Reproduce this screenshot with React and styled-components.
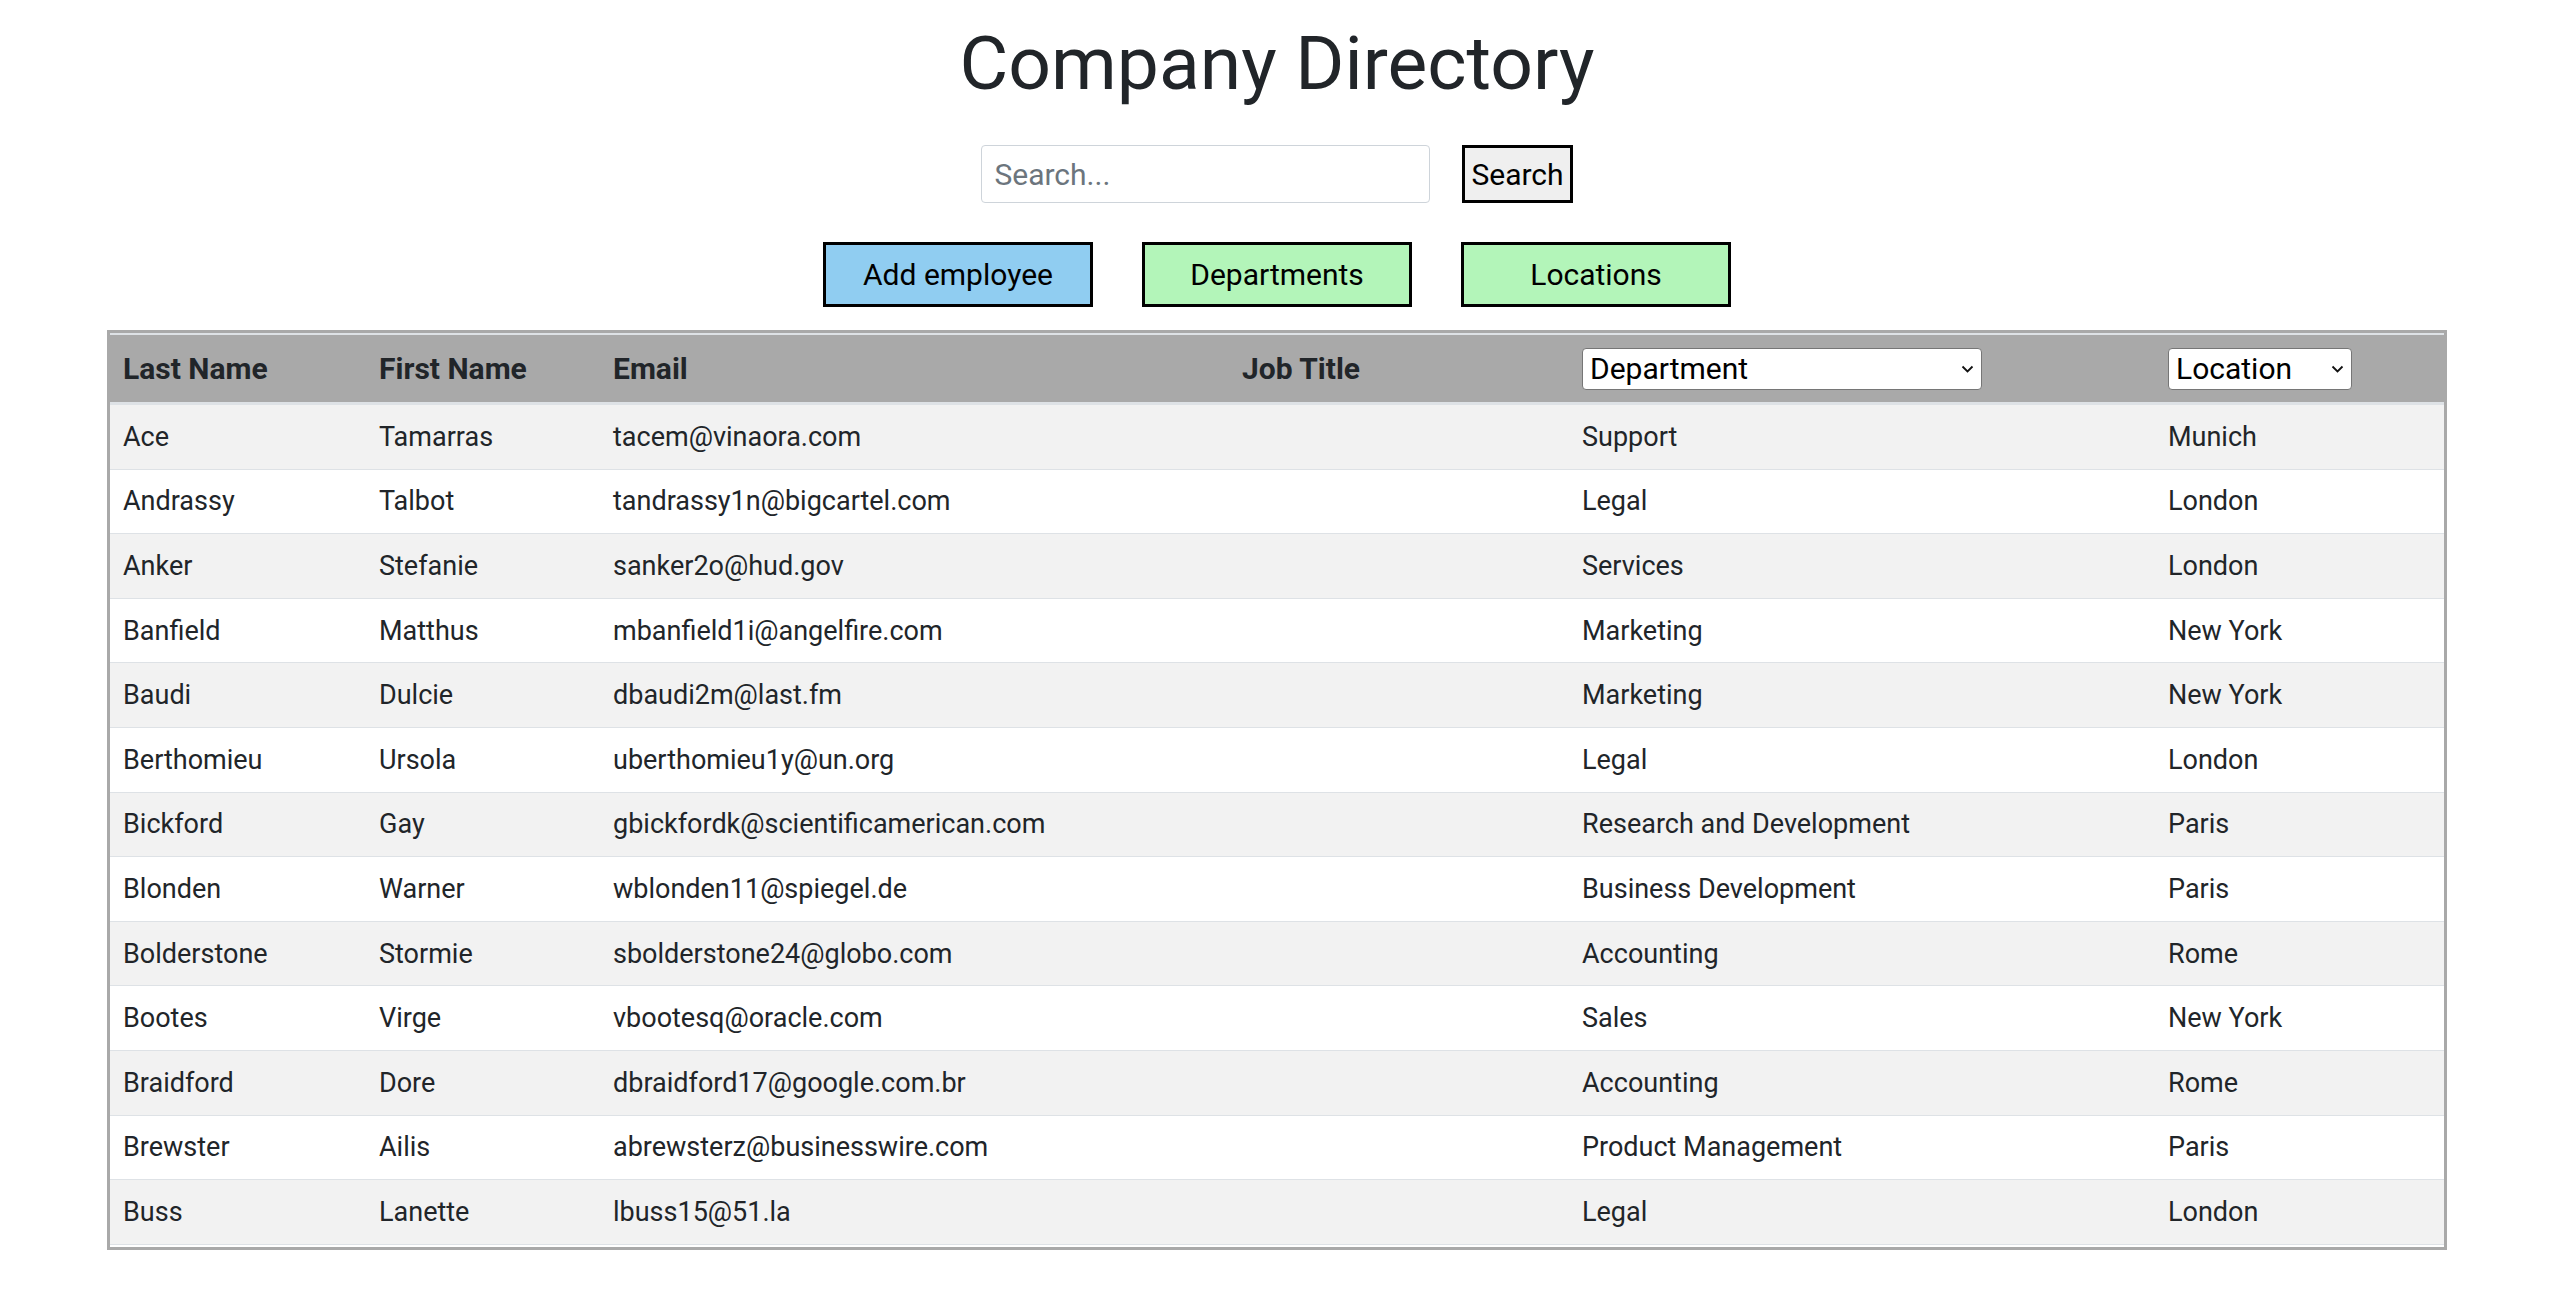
import React from 'react'
import styled, { createGlobalStyle } from 'styled-components'

const GlobalStyle = createGlobalStyle`
  body {
    margin: 0;
    background: #fff;
    color: #212529;
    font-family: Roboto, "Liberation Sans", Arial, sans-serif;
  }
`

const employees = [
  ['Ace', 'Tamarras', 'tacem@vinaora.com', 'Support', 'Munich'],
  ['Andrassy', 'Talbot', 'tandrassy1n@bigcartel.com', 'Legal', 'London'],
  ['Anker', 'Stefanie', 'sanker2o@hud.gov', 'Services', 'London'],
  ['Banfield', 'Matthus', 'mbanfield1i@angelfire.com', 'Marketing', 'New York'],
  ['Baudi', 'Dulcie', 'dbaudi2m@last.fm', 'Marketing', 'New York'],
  ['Berthomieu', 'Ursola', 'uberthomieu1y@un.org', 'Legal', 'London'],
  ['Bickford', 'Gay', 'gbickfordk@scientificamerican.com', 'Research and Development', 'Paris'],
  ['Blonden', 'Warner', 'wblonden11@spiegel.de', 'Business Development', 'Paris'],
  ['Bolderstone', 'Stormie', 'sbolderstone24@globo.com', 'Accounting', 'Rome'],
  ['Bootes', 'Virge', 'vbootesq@oracle.com', 'Sales', 'New York'],
  ['Braidford', 'Dore', 'dbraidford17@google.com.br', 'Accounting', 'Rome'],
  ['Brewster', 'Ailis', 'abrewsterz@businesswire.com', 'Product Management', 'Paris'],
  ['Buss', 'Lanette', 'lbuss15@51.la', 'Legal', 'London'],
]

const Page = styled.div`
  display: flex;
  flex-direction: column;
  align-items: center;
`

const Title = styled.h1`
  margin: 18px 0 0;
  font-size: 75px;
  font-weight: 400;
  line-height: 1.2;
  color: #212529;
`

const SearchBar = styled.form`
  display: flex;
  gap: 32px;
  margin-top: 37px;
`

const SearchInput = styled.input`
  box-sizing: border-box;
  width: 449px;
  height: 58px;
  padding: 0 12px;
  border: 1px solid #ced4da;
  border-radius: 4px;
  font-family: Roboto, sans-serif;
  font-size: 30px;
  color: #495057;
  &::placeholder {
    color: #6c757d;
  }
`

const SearchButton = styled.button`
  box-sizing: border-box;
  height: 58px;
  padding: 0 6px;
  background: #efefef;
  border: 3px solid #000;
  font-family: Roboto, sans-serif;
  font-size: 30px;
  color: #000;
`

const ActionBar = styled.div`
  display: flex;
  gap: 49px;
  margin-top: 39px;
`

const ActionButton = styled.button`
  box-sizing: border-box;
  width: 270px;
  height: 65px;
  background: ${p => (p.$tone === 'blue' ? '#90cdf1' : '#b3f5b9')};
  border: 3px solid #000;
  font-family: Roboto, sans-serif;
  font-size: 30px;
  color: #000;
`

const TableWrap = styled.div`
  box-sizing: border-box;
  width: calc(100% - 214px);
  height: 920px;
  margin-top: 23px;
  border: 3px solid #a9a9a9;
  overflow: hidden;
`

const Table = styled.table`
  width: 100%;
  border-collapse: separate;
  border-spacing: 0;
  table-layout: fixed;
  font-size: 27px;
`

const Col = styled.col`
  width: ${p => p.$w}px;
`

const HeadCell = styled.th`
  height: 67px;
  padding: 0 13px;
  background: #a9a9a9;
  border-top: 2px solid #dee2e6;
  border-bottom: 2px solid #dee2e6;
  text-align: left;
  font-size: 30px;
  font-weight: 700;
  color: #212529;
  vertical-align: middle;
`

const Row = styled.tr`
  background: ${p => (p.$odd ? '#f2f2f2' : '#fff')};
  &:last-child td {
    border-bottom: 1px solid #dee2e6;
  }
`

const Cell = styled.td`
  height: 63.6px;
  padding: 0 13px;
  border-top: 1px solid #dee2e6;
  vertical-align: middle;
  white-space: nowrap;
  color: #212529;
`

const SelectBox = styled.div`
  position: relative;
  width: ${p => p.$w}px;
  height: 42px;
`

const FilterSelect = styled.select`
  appearance: none;
  box-sizing: border-box;
  width: 100%;
  height: 100%;
  padding: 0 30px 0 7px;
  background: #fff;
  border: 1px solid #767676;
  border-radius: 4px;
  font-family: Roboto, sans-serif;
  font-size: 30px;
  font-weight: 400;
  color: #000;
`

const Chevron = styled.svg`
  position: absolute;
  right: 8px;
  top: 17px;
  width: 13px;
  height: 8px;
  pointer-events: none;
`

const Filter = ({ w, label }) => (
  <SelectBox $w={w}>
    <FilterSelect defaultValue="">
      <option value="">{label}</option>
    </FilterSelect>
    <Chevron viewBox="0 0 13 8">
      <path d="M1.5 1.5 L6.5 6.5 L11.5 1.5" fill="none" stroke="#111" strokeWidth="1.8" />
    </Chevron>
  </SelectBox>
)

export default function App() {
  return (
    <Page>
      <GlobalStyle />
      <Title>Company Directory</Title>
      <SearchBar onSubmit={e => e.preventDefault()}>
        <SearchInput placeholder="Search..." />
        <SearchButton>Search</SearchButton>
      </SearchBar>
      <ActionBar>
        <ActionButton $tone="blue">Add employee</ActionButton>
        <ActionButton>Departments</ActionButton>
        <ActionButton>Locations</ActionButton>
      </ActionBar>
      <TableWrap>
        <Table>
          <colgroup>
            <Col $w={256} />
            <Col $w={234} />
            <Col $w={629} />
            <Col $w={340} />
            <Col $w={586} />
            <Col $w={290} />
          </colgroup>
          <thead>
            <tr>
              <HeadCell>Last Name</HeadCell>
              <HeadCell>First Name</HeadCell>
              <HeadCell>Email</HeadCell>
              <HeadCell>Job Title</HeadCell>
              <HeadCell>
                <Filter w={400} label="Department" />
              </HeadCell>
              <HeadCell>
                <Filter w={184} label="Location" />
              </HeadCell>
            </tr>
          </thead>
          <tbody>
            {employees.map((e, i) => (
              <Row key={e[2]} $odd={i % 2 === 0}>
                <Cell>{e[0]}</Cell>
                <Cell>{e[1]}</Cell>
                <Cell>{e[2]}</Cell>
                <Cell></Cell>
                <Cell>{e[3]}</Cell>
                <Cell>{e[4]}</Cell>
              </Row>
            ))}
          </tbody>
        </Table>
      </TableWrap>
    </Page>
  )
}
